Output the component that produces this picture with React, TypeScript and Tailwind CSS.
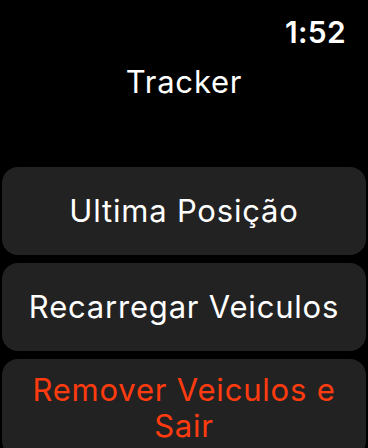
import React from 'react';

const buttons = [
  { label: 'Ultima Posição', danger: false },
  { label: 'Recarregar Veiculos', danger: false },
  { label: 'Remover Veiculos e Sair', danger: true },
];

export default function App() {
  return (
    <div
      className="w-[368px] h-[448px] bg-black text-white overflow-hidden flex flex-col"
      style={{ fontFamily: 'Inter, Roboto, "Noto Sans", sans-serif' }}
    >
      <div className="flex justify-end pt-[14px] pr-[22px] h-[64px] shrink-0">
        <span className="text-[30px] font-semibold leading-[36px] tracking-[0.3px]">1:52</span>
      </div>
      <div className="text-center text-[31px] leading-[36px] h-[103px] shrink-0 tracking-[0.8px]">Tracker</div>
      <div className="flex flex-col gap-[8px] px-[2px] shrink-0">
        {buttons.map((b) => (
          <button
            key={b.label}
            className={`w-full min-h-[88px] rounded-[16px] bg-[#222222] px-[16px] py-[13px] text-[31px] leading-[36px] text-center tracking-[0.8px] ${
              b.danger ? 'text-[#ff3b0f]' : 'text-white'
            }`}
          >
            {b.label}
          </button>
        ))}
      </div>
    </div>
  );
}
